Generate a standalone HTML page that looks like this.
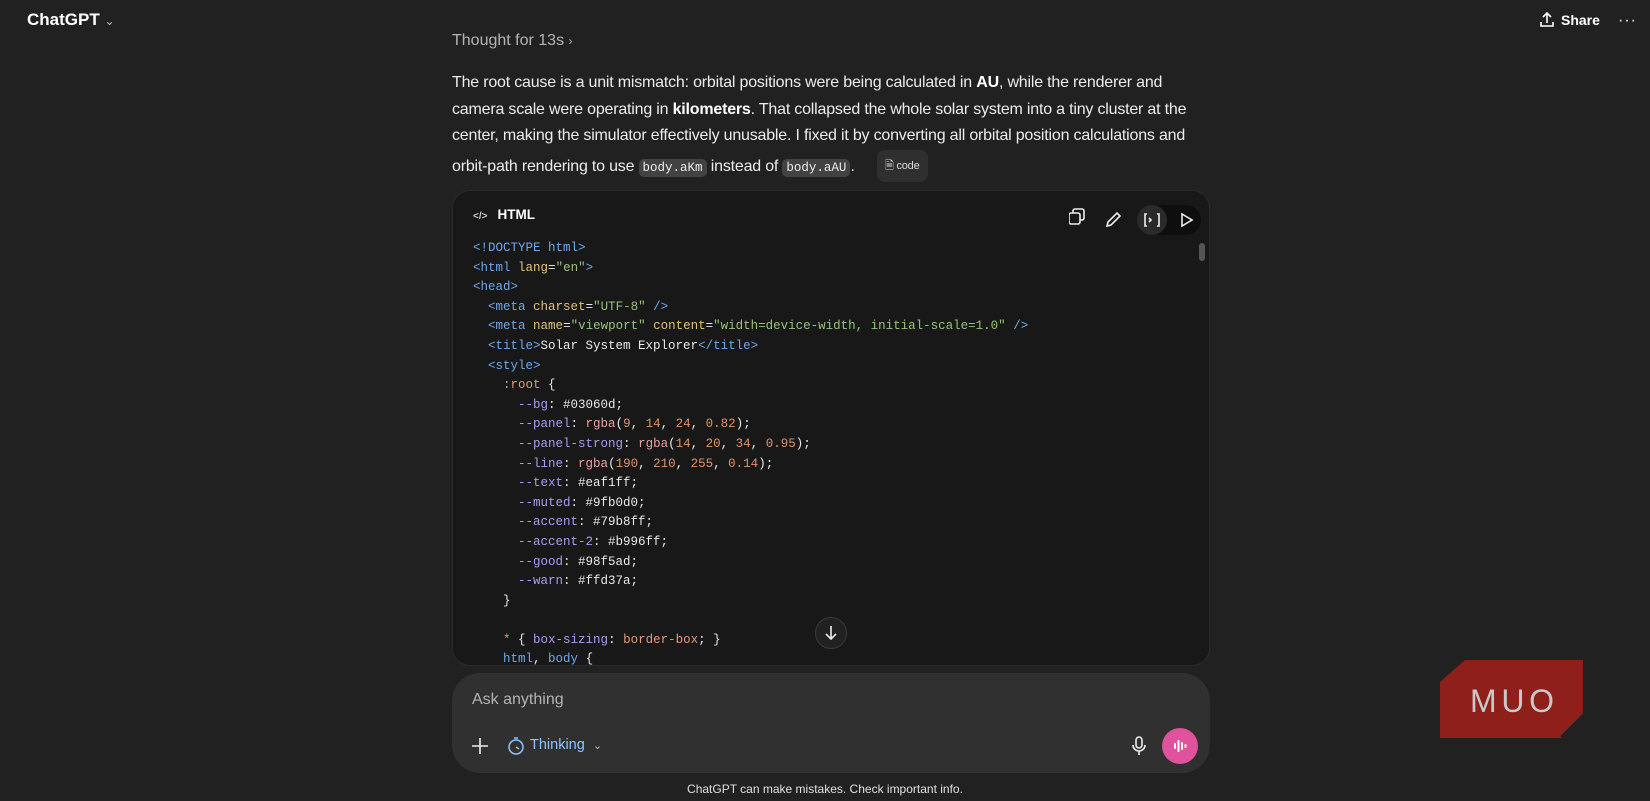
<!DOCTYPE html>
<html><head><meta charset="utf-8"><style>
body{margin:0;width:1650px;height:801px;background:#212121;font-family:"Liberation Sans",sans-serif;color:#ececec;position:relative;overflow:hidden}
.a{position:absolute}
.hd{left:27px;top:10px;font-size:17px;font-weight:bold;color:#fff}
.share{left:1561px;top:12px;font-size:14px;color:#fff;font-weight:bold}
.thought{left:452px;top:32px;font-size:16px;color:#b4b4b4}
.para{left:452px;top:70px;font-size:16px;line-height:26.5px;color:#ececec;white-space:nowrap;letter-spacing:-0.2px}
.para b{color:#fff}
code{font-family:"Liberation Mono",monospace;font-size:12.5px;background:#424242;border-radius:5px;padding:2px 4px;color:#ececec;letter-spacing:0}
.chip{display:inline-block;font-size:11px;background:#2f2f2f;border-radius:8px;padding:3px 8px 3px 8px;margin-left:18px;color:#ddd;vertical-align:2px}
.cb{left:452px;top:190px;width:758px;height:476px;background:#181818;border-radius:18px;border:1px solid #2a2a2a;box-sizing:border-box;overflow:hidden}
.cbh{position:absolute;left:20px;top:16px;font-size:13.5px;font-weight:bold;color:#fff}
pre{position:absolute;left:20px;top:48px;margin:0;font-family:"Liberation Mono",monospace;font-size:12.5px;line-height:19.6px;color:#e8e8e8}
.t{color:#6fa8ea}.at{color:#e5c07b}.s{color:#98c379}.p{color:#a99cf0}.r{color:#e59a78}.n{color:#e0926a}.f{color:#eaa0a0}
.inp{left:452px;top:673px;width:758px;height:100px;background:#303030;border-radius:28px}
.foot{left:0;width:1650px;top:782px;text-align:center;font-size:12px;color:#e0e0e0}
</style></head><body>
<div class="a hd">ChatGPT <span style="font-weight:normal;font-size:12px;color:#bbb">&#8964;</span></div>
<svg class="a" style="left:1538px;top:11px" width="18" height="18" viewBox="0 0 18 18" fill="none" stroke="#fff" stroke-width="1.6"><path d="M9 12V2M5 6l4-4 4 4M3 11v4h12v-4"/></svg>
<div class="a share">Share</div>
<div class="a" style="left:1618px;top:12px;font-size:16px;color:#fff;letter-spacing:1px">···</div>
<div class="a thought">Thought for 13s <span style="font-size:12px">›</span></div>
<div class="a para">The root cause is a unit mismatch: orbital positions were being calculated in <b>AU</b>, while the renderer and<br>camera scale were operating in <b>kilometers</b>. That collapsed the whole solar system into a tiny cluster at the<br>center, making the simulator effectively unusable. I fixed it by converting all orbital position calculations and<br>orbit-path rendering to use <code>body.aKm</code> instead of <code>body.aAU</code>. <span class="chip">&#128462; code</span></div>
<div class="a cb">
<div class="cbh"><span style="font-size:10px;color:#ccc;margin-right:10px">&lt;/&gt;</span>HTML</div>
<svg class="a" style="left:616px;top:14px" width="140" height="30" viewBox="0 0 140 30" fill="none" stroke="#eee" stroke-width="1.6">
<rect x="0" y="8" width="11" height="11" rx="2"/><path d="M4 8V6a2 2 0 0 1 2-2h7a2 2 0 0 1 2 2v7a2 2 0 0 1-2 2h-2"/>
<path d="M38 21l1-4 9-9 3 3-9 9z"/>
<rect x="68" y="0" width="64" height="30" rx="15" fill="#0e0e0e" stroke="none"/><circle cx="83" cy="15" r="15" fill="#2a2a2a" stroke="none"/>
<path d="M78 9h-2v12h2M88 9h2v12h-2M80 13l2 2-2 2"/><path d="M113 9l10 6-10 6z"/></svg>
<div class="a" style="left:746px;top:52px;width:6px;height:18px;background:#555;border-radius:3px"></div>
<pre><span class="t">&lt;!DOCTYPE html&gt;</span>
<span class="t">&lt;html</span> <span class="at">lang</span>=<span class="s">"en"</span><span class="t">&gt;</span>
<span class="t">&lt;head&gt;</span>
  <span class="t">&lt;meta</span> <span class="at">charset</span>=<span class="s">"UTF-8"</span> <span class="t">/&gt;</span>
  <span class="t">&lt;meta</span> <span class="at">name</span>=<span class="s">"viewport"</span> <span class="at">content</span>=<span class="s">"width=device-width, initial-scale=1.0"</span> <span class="t">/&gt;</span>
  <span class="t">&lt;title&gt;</span>Solar System Explorer<span class="t">&lt;/title&gt;</span>
  <span class="t">&lt;style&gt;</span>
    <span class="r">:root</span> {
      <span class="p">--bg</span>: #03060d;
      <span class="p">--panel</span>: <span class="f">rgba</span>(<span class="n">9</span>, <span class="n">14</span>, <span class="n">24</span>, <span class="n">0.82</span>);
      <span class="p">--panel-strong</span>: <span class="f">rgba</span>(<span class="n">14</span>, <span class="n">20</span>, <span class="n">34</span>, <span class="n">0.95</span>);
      <span class="p">--line</span>: <span class="f">rgba</span>(<span class="n">190</span>, <span class="n">210</span>, <span class="n">255</span>, <span class="n">0.14</span>);
      <span class="p">--text</span>: #eaf1ff;
      <span class="p">--muted</span>: #9fb0d0;
      <span class="p">--accent</span>: #79b8ff;
      <span class="p">--accent-2</span>: #b996ff;
      <span class="p">--good</span>: #98f5ad;
      <span class="p">--warn</span>: #ffd37a;
    }

    <span class="r">*</span> { <span class="p">box-sizing</span>: <span class="r">border-box</span>; }
    <span class="t">html</span>, <span class="t">body</span> {</pre>
<div class="a" style="left:362px;top:426px;width:32px;height:32px;border-radius:50%;background:#212121;border:1px solid #3a3a3a;box-sizing:border-box"><svg width="30" height="30" viewBox="0 0 30 30" fill="none" stroke="#eee" stroke-width="1.6"><path d="M15 8v13M10 16l5 5 5-5"/></svg></div>
</div>
<div class="a inp">
<div class="a" style="left:20px;top:18px;font-size:16px;color:#b4b4b4">Ask anything</div>
<svg class="a" style="left:18px;top:63px" width="20" height="20" viewBox="0 0 20 20" stroke="#eee" stroke-width="1.6"><path d="M10 2v16M2 10h16"/></svg>
<svg class="a" style="left:54px;top:63px" width="20" height="20" viewBox="0 0 20 20" fill="none" stroke="#8ec5ff" stroke-width="1.5"><circle cx="10" cy="11" r="7"/><path d="M8 2h4M10 11l3 2"/></svg>
<div class="a" style="left:78px;top:64px;font-size:14.5px;color:#8ec5ff">Thinking <span style="color:#bbb;font-size:11px;margin-left:4px">&#8964;</span></div>
<svg class="a" style="left:677px;top:62px" width="20" height="22" viewBox="0 0 20 22" fill="none" stroke="#eee" stroke-width="1.6"><rect x="7" y="2" width="6" height="11" rx="3"/><path d="M4 10a6 6 0 0 0 12 0M10 16v4"/></svg>
<div class="a" style="left:710px;top:55px;width:36px;height:36px;border-radius:50%;background:#e0529b"><svg width="36" height="36" viewBox="0 0 36 36" stroke="#fff" stroke-width="2" stroke-linecap="round"><path d="M13 16v4M16.5 13v10M20 15v6M23.5 17v2"/></svg></div>
</div>
<div class="a foot">ChatGPT can make mistakes. Check important info.</div>
<svg class="a" style="left:1440px;top:660px" width="150" height="78" viewBox="0 0 150 78"><path d="M25 0H143V60L125 78H0V22z" fill="#8e1f1a"/><path d="M150 50L122 78" stroke="#212121" stroke-width="5"/>
<text x="30" y="52" font-family="Liberation Sans,sans-serif" font-size="32" fill="#c8c8c8" textLength="84">MUO</text></svg>
</body></html>
